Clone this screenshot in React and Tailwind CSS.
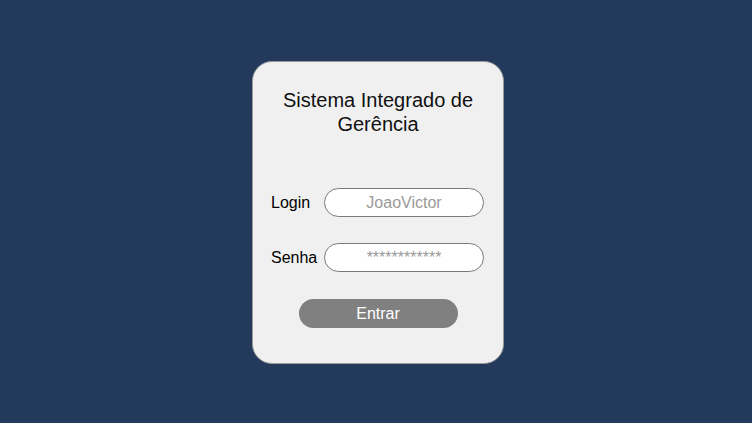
import React from "react";

export default function App() {
  return (
    <div
      className="w-[752px] h-[423px] bg-[#233a5c] flex items-start justify-center pt-[61px] pl-[4px]"
      style={{ fontFamily: '"Liberation Sans", Arial, sans-serif' }}
    >
      <div className="w-[252px] h-[303px] bg-[#f0f0f0] rounded-[20px] border border-[#9a9a9a] flex flex-col items-center pt-[26px] px-[18px]">
        <h1 className="text-[20px] leading-[24px] text-[#111] text-center font-normal">
          Sistema Integrado de
          <br />
          Gerência
        </h1>
        <div className="w-full flex items-center mt-[52px]">
          <span className="w-[53px] text-[16px] text-black">Login</span>
          <input
            className="w-[160px] h-[29px] rounded-full border border-[#7a7a7a] bg-white text-center text-[16px] text-[#999] placeholder:text-[#9a9a9a] outline-none"
            placeholder="JoaoVictor"
            readOnly
          />
        </div>
        <div className="w-full flex items-center mt-[26px]">
          <span className="w-[53px] text-[16px] text-black">Senha</span>
          <input
            className="w-[160px] h-[29px] rounded-full border border-[#7a7a7a] bg-white text-center text-[16px] text-[#999] placeholder:text-[#9a9a9a] outline-none"
            placeholder="************"
            readOnly
          />
        </div>
        <button className="mt-[27px] w-[159px] h-[29px] rounded-full bg-[#808080] text-white text-[16px]">
          Entrar
        </button>
      </div>
    </div>
  );
}
